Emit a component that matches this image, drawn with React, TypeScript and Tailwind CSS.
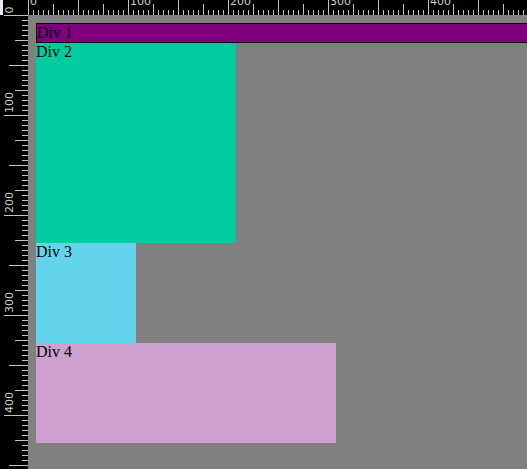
import React from "react";

const TOP_W = 499;
const LEFT_H = 454;

function TopRuler() {
  const ticks: React.ReactNode[] = [];
  for (let v = 0; v <= TOP_W; v += 5) {
    let y1 = 10;
    if (v % 50 === 0) y1 = 0;
    else if (v % 25 === 0) y1 = 4;
    ticks.push(
      <line key={v} x1={v + 0.5} x2={v + 0.5} y1={y1} y2={15} stroke="#c4c4c4" strokeWidth={1} />
    );
  }
  const labels = [0, 100, 200, 300, 400].map((v) => (
    <text key={v} x={v + 2} y={4.5} fontSize={11} fill="#cfcfcf" fontFamily="DejaVu Sans, sans-serif">
      {v}
    </text>
  ));
  return (
    <svg width={TOP_W} height={15} className="block">
      <rect width={TOP_W} height={15} fill="#000" />
      {ticks}
      {labels}
    </svg>
  );
}

function Corner() {
  return (
    <svg width={28} height={15} className="block">
      <rect width={28} height={15} fill="#000" />
      <rect width={3} height={15} fill="#e6ebf1" />
      <text
        transform="translate(13 13.5) rotate(-90)"
        fontSize={11}
        fill="#cfcfcf"
        fontFamily="DejaVu Sans, sans-serif"
      >
        0
      </text>
    </svg>
  );
}

function LeftRuler() {
  const ticks: React.ReactNode[] = [];
  for (let v = 0; v <= LEFT_H; v += 5) {
    let x1 = 22;
    if (v % 100 === 0) x1 = 4;
    else if (v % 50 === 0) x1 = 9;
    else if (v % 25 === 0) x1 = 15;
    ticks.push(
      <line key={v} x1={x1} x2={28} y1={v + 0.5} y2={v + 0.5} stroke="#c4c4c4" strokeWidth={1} />
    );
  }
  const labels = [100, 200, 300, 400].map((v) => (
    <text
      key={v}
      transform={`translate(13 ${v - 2}) rotate(-90)`}
      fontSize={11}
      fill="#cfcfcf"
      fontFamily="DejaVu Sans, sans-serif"
    >
      {v}
    </text>
  ));
  return (
    <svg width={28} height={LEFT_H} className="block">
      <rect width={28} height={LEFT_H} fill="#000" />
      {ticks}
      {labels}
    </svg>
  );
}

export default function App() {
  return (
    <div className="w-[527px] h-[469px] overflow-hidden flex flex-col bg-black">
      <div className="h-[15px] flex shrink-0">
        <div className="w-[28px] h-[15px] shrink-0">
          <Corner />
        </div>
        <TopRuler />
      </div>
      <div className="flex flex-1 min-h-0">
        <div className="w-[28px] shrink-0">
          <LeftRuler />
        </div>
        <div className="flex-1 min-w-0 bg-[#808080] p-2 overflow-hidden font-['Liberation_Serif',serif] text-base leading-[18px] text-black">
          <div className="w-[600px] border border-black bg-[#800080]">Div 1</div>
          <div className="w-[200px] h-[200px] bg-[#00cc9f]">Div 2</div>
          <div className="w-[100px] h-[100px] bg-[#64d4ec]">Div 3</div>
          <div className="w-[300px] h-[100px] bg-[#cda0cf]">Div 4</div>
        </div>
      </div>
    </div>
  );
}
